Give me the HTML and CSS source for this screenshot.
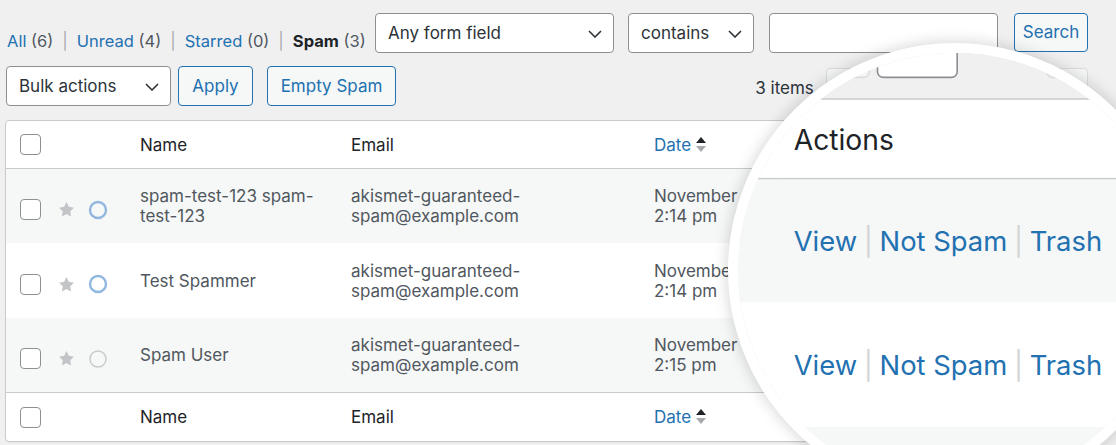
FILE: index.html
```html
<!DOCTYPE html>
<html lang="en">
<head>
<meta charset="utf-8">
<title>Entries – Spam</title>
<link rel="stylesheet" href="styles.css">
</head>
<body>
<div class="page" id="page">
  <div class="toolbar-top">
    <div class="views">
      <a class="view-link">All</a> <span class="count">(6)</span><span class="sep">|</span><a class="view-link">Unread</a> <span class="count">(4)</span><span class="sep">|</span><a class="view-link">Starred</a> <span class="count">(0)</span><span class="sep">|</span><strong class="current">Spam</strong> <span class="count">(3)</span>
    </div>
    <div class="search">
      <div class="select select-field">Any form field<svg class="chev" viewBox="0 0 14 8" width="14" height="8"><path d="M1 1l6 6 6-6" fill="none" stroke="#2c3338" stroke-width="1.6"/></svg></div>
      <div class="select select-cond">contains<svg class="chev" viewBox="0 0 14 8" width="14" height="8"><path d="M1 1l6 6 6-6" fill="none" stroke="#2c3338" stroke-width="1.6"/></svg></div>
      <div class="text-input search-input"></div>
      <button class="btn btn-search" type="button">Search</button>
    </div>
  </div>

  <div class="toolbar-nav">
    <div class="bulk">
      <div class="select select-bulk">Bulk actions<svg class="chev" viewBox="0 0 14 8" width="14" height="8"><path d="M1 1l6 6 6-6" fill="none" stroke="#2c3338" stroke-width="1.6"/></svg></div>
      <button class="btn btn-apply" type="button">Apply</button>
      <button class="btn btn-empty" type="button">Empty Spam</button>
    </div>
    <div class="pages">
      <span class="num">3 items</span>
      <span class="pg-btn">«</span>
      <span class="pg-btn">‹</span>
      <span class="current-page">1</span>
      <span class="paging-text">of 1</span>
      <span class="pg-btn">›</span>
      <span class="pg-btn">»</span>
    </div>
  </div>

  <table class="entries">
    <colgroup>
      <col class="c-cb"><col class="c-name"><col class="c-email"><col class="c-date"><col class="c-actions">
    </colgroup>
    <thead>
      <tr>
        <th class="cb"><span class="checkbox"></span></th>
        <th>Name</th>
        <th>Email</th>
        <th><a class="sort-link">Date</a><svg class="sort-ind" viewBox="0 0 10 16" width="10" height="16"><polygon points="5,0 10,6 0,6" fill="#1d2327"/><polygon points="0,9 10,9 5,15" fill="#a7aaad"/></svg></th>
        <th>Actions</th>
      </tr>
    </thead>
    <tbody>
      <tr class="alt">
        <td class="cb"><span class="cb-wrap"><span class="checkbox"></span><svg class="star" viewBox="0 0 20 20" width="17" height="17"><path d="M10 1.3l2.7 5.6 6.1.9-4.4 4.3 1 6.1L10 15.3l-5.4 2.9 1-6.1L1.2 7.8l6.1-.9z" fill="#c3c4c7"/></svg><svg class="read" viewBox="0 0 20 20" width="20" height="20"><circle cx="10" cy="10" r="8" fill="none" stroke="#92b7df" stroke-width="2.4"/></svg></span></td>
        <td>spam-test-123 spam-<br>test-123</td>
        <td>akismet-guaranteed-<br>spam@example.com</td>
        <td>November 14, 2023<br>2:14 pm</td>
        <td class="row-actions"><a>View</a><span class="rsep">|</span><a>Not Spam</a><span class="rsep">|</span><a>Trash</a></td>
      </tr>
      <tr class="mid">
        <td class="cb"><span class="cb-wrap"><span class="checkbox"></span><svg class="star" viewBox="0 0 20 20" width="17" height="17"><path d="M10 1.3l2.7 5.6 6.1.9-4.4 4.3 1 6.1L10 15.3l-5.4 2.9 1-6.1L1.2 7.8l6.1-.9z" fill="#c3c4c7"/></svg><svg class="read" viewBox="0 0 20 20" width="20" height="20"><circle cx="10" cy="10" r="8" fill="none" stroke="#92b7df" stroke-width="2.4"/></svg></span></td>
        <td>Test Spammer</td>
        <td>akismet-guaranteed-<br>spam@example.com</td>
        <td>November 14, 2023<br>2:14 pm</td>
        <td class="row-actions"><a>View</a><span class="rsep">|</span><a>Not Spam</a><span class="rsep">|</span><a>Trash</a></td>
      </tr>
      <tr class="alt">
        <td class="cb"><span class="cb-wrap"><span class="checkbox"></span><svg class="star" viewBox="0 0 20 20" width="17" height="17"><path d="M10 1.3l2.7 5.6 6.1.9-4.4 4.3 1 6.1L10 15.3l-5.4 2.9 1-6.1L1.2 7.8l6.1-.9z" fill="#c3c4c7"/></svg><svg class="read" viewBox="0 0 20 20" width="20" height="20"><circle cx="10" cy="10" r="8" fill="none" stroke="#c9cacc" stroke-width="1.5"/></svg></span></td>
        <td>Spam User</td>
        <td>akismet-guaranteed-<br>spam@example.com</td>
        <td>November 14, 2023<br>2:15 pm</td>
        <td class="row-actions"><a>View</a><span class="rsep">|</span><a>Not Spam</a><span class="rsep">|</span><a>Trash</a></td>
      </tr>
    </tbody>
    <tfoot>
      <tr>
        <th class="cb"><span class="checkbox"></span></th>
        <th>Name</th>
        <th>Email</th>
        <th><a class="sort-link">Date</a><svg class="sort-ind" viewBox="0 0 10 16" width="10" height="16"><polygon points="5,0 10,6 0,6" fill="#1d2327"/><polygon points="0,9 10,9 5,15" fill="#a7aaad"/></svg></th>
        <th>Actions</th>
      </tr>
    </tfoot>
  </table>
</div>

<div class="lens" aria-hidden="true"><div class="lens-view" id="lens-view"></div></div>
<script src="script.js"></script>
</body>
</html>
```

FILE: styles.css
```css
html, body {
  margin: 0;
  padding: 0;
  background: #f0f0f1;
  overflow: hidden;
}

.page {
  width: 1116px;
  height: 445px;
  box-sizing: border-box;
  padding: 13px 28px 0 5px;
  background: #f0f0f1;
  font-family: Inter, "Noto Sans", sans-serif;
  font-size: 17px;
  color: #50575e;
  overflow: hidden;
}

/* top toolbar */
.toolbar-top {
  display: flex;
  justify-content: space-between;
  align-items: flex-end;
  height: 40px;
}

.views {
  margin-left: 2px;
  line-height: 24px;
  white-space: nowrap;
  font-size: 16.5px;
}
.view-link { color: #2271b1; }
.current { color: #1d2327; font-weight: 700; }
.count { color: #50575e; }
.sep { color: #a7aaad; margin: 0 9px 0 9px; }

.search {
  display: flex;
  align-items: flex-start;
}

.select {
  position: relative;
  box-sizing: border-box;
  height: 40px;
  line-height: 38px;
  padding: 0 36px 0 12px;
  background: #fff;
  border: 1px solid #8c8f94;
  border-radius: 4px;
  color: #2c3338;
  white-space: nowrap;
}
.select .chev {
  position: absolute;
  right: 11px;
  top: 16px;
}
.select-field { width: 239px; }
.select-cond { width: 126px; margin-left: 14px; }
.select-bulk { width: 165px; }

.text-input {
  box-sizing: border-box;
  height: 40px;
  background: #fff;
  border: 1px solid #8c8f94;
  border-radius: 4px;
}
.search-input { width: 229px; margin-left: 15px; }

.btn {
  box-sizing: border-box;
  height: 40px;
  padding: 0;
  background: #f6f7f7;
  border: 1px solid #2271b1;
  border-radius: 4px;
  color: #2271b1;
  font-family: inherit;
  font-size: 17px;
  line-height: 38px;
  white-space: nowrap;
}
.btn-search { width: 74px; height: 39px; line-height: 37px; margin-left: 16px; }
.btn-apply { width: 75px; margin-left: 7px; }
.btn-empty { width: 129px; margin-left: 14px; }

/* second toolbar */
.toolbar-nav {
  display: flex;
  justify-content: space-between;
  align-items: center;
  height: 40px;
  margin-top: 13px;
}
.bulk {
  display: flex;
  margin-left: 1px;
}

.pages {
  display: flex;
  align-items: center;
  margin-top: 3px;
  color: #2c3338;
  white-space: nowrap;
}
.num { margin-right: 8px; color: #2c3338; }
.pg-btn {
  box-sizing: border-box;
  width: 37px;
  height: 40px;
  margin-left: 4px;
  border: 1px solid #dcdcde;
  border-radius: 4px;
  background: #f6f7f7;
  color: #a7aaad;
  font-size: 20px;
  line-height: 36px;
  text-align: center;
}
.pg-btn:first-of-type { margin-left: 0; }
.current-page {
  box-sizing: border-box;
  width: 49px;
  height: 40px;
  margin-left: 4px;
  background: #fff;
  border: 1px solid #8c8f94;
  border-radius: 4px;
  line-height: 38px;
  text-align: center;
  color: #2c3338;
}
.paging-text { margin: 0 9px 0 12px; color: #2c3338; }

/* table */
.entries {
  width: 1083px;
  margin-top: 14px;
  table-layout: fixed;
  border-collapse: separate;
  border-spacing: 0;
  background: #fff;
  border: 1px solid #c9cacc;
  border-radius: 4px;
  box-shadow: 0 1px 1px rgba(0, 0, 0, 0.04);
  overflow: hidden;
}
.c-cb { width: 124px; }
.c-name { width: 211px; }
.c-email { width: 303px; }
.c-date { width: 204px; }
.c-actions { width: 239px; }

.entries th,
.entries td {
  padding: 0 10px;
  text-align: left;
  vertical-align: middle;
  line-height: 20px;
  white-space: nowrap;
  overflow: hidden;
}
.entries thead tr { height: 48px; }
.entries tfoot tr { height: 49px; }
.entries tbody tr { height: 74px; }
.entries tbody tr.mid { height: 75px; }
.entries th {
  font-weight: 400;
  color: #1d2327;
}
.entries thead th { border-bottom: 1px solid #c9cacc; }
.entries tfoot th { border-top: 1px solid #c9cacc; }
.entries tbody td { color: #50575e; }
.entries tbody tr.alt td { background: #f6f7f7; }

.entries .cb { padding: 0 0 0 14px; }
.entries tbody .cb { padding-top: 7px; }

.checkbox {
  display: inline-block;
  box-sizing: border-box;
  width: 21px;
  height: 21px;
  background: #fff;
  border: 1px solid #8c8f94;
  border-radius: 4px;
  vertical-align: middle;
}
.cb-wrap {
  display: flex;
  align-items: center;
}
.star { margin-left: 17px; }
.read { margin-left: 13px; }

.sort-link { color: #2271b1; }
.sort-ind {
  margin-left: 5px;
  vertical-align: -2px;
}

.row-actions a { color: #2271b1; }
.row-actions { font-size: 16.5px; }
.rsep { color: #d3d4d6; margin: 0 4px; }

/* magnifier */
.lens {
  position: absolute;
  left: 728px;
  top: 43px;
  width: 454px;
  height: 454px;
  box-sizing: border-box;
  border: 10px solid #fff;
  border-radius: 50%;
  overflow: hidden;
  background: #f0f0f1;
  box-shadow: 0 0 14px 2px rgba(0, 0, 0, 0.15), inset 0 0 10px rgba(0, 0, 0, 0.10);
}
.lens-view {
  position: absolute;
  left: 0;
  top: 0;
  transform: translate(-1368.6px, -154px) scale(1.66);
  transform-origin: 0 0;
}
```

FILE: script.js
```js
(function () {
  var page = document.getElementById('page');
  var view = document.getElementById('lens-view');
  if (!page || !view) return;
  var copy = page.cloneNode(true);
  copy.removeAttribute('id');
  view.appendChild(copy);
})();
```
